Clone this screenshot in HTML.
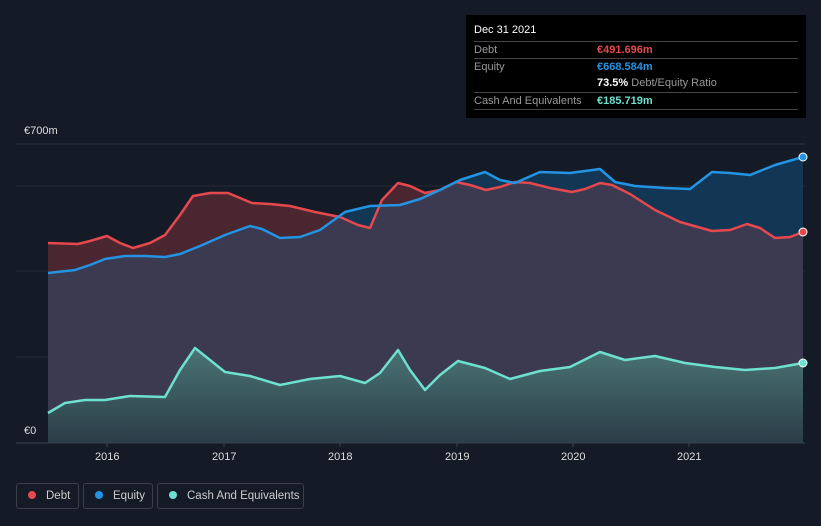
<!DOCTYPE html>
<html><head><style>
body{margin:0;width:821px;height:526px;background:#151b26;font-family:"Liberation Sans",sans-serif;overflow:hidden;position:relative}
.tt{position:absolute;left:466px;top:15px;width:340px;height:103px;background:#000;color:#fff;font-size:11px}
.row{position:absolute;left:8px;width:324px;border-top:1px solid #444;height:17px;line-height:17px}
.lab{color:#999}
.leg{position:absolute;top:483px;height:26px;border:1px solid #3a3f4a;border-radius:3px;color:#ccc;font-size:11.5px;line-height:24px;box-sizing:border-box;white-space:nowrap;overflow:hidden}
.dot{display:inline-block;width:8px;height:8px;border-radius:50%;margin:0 10px 0 11px;vertical-align:-0px}
.ax{position:absolute;color:#ddd;font-size:11px}
</style></head><body>
<svg width="821" height="526" style="position:absolute;left:0;top:0">
<defs><linearGradient id="cg" x1="0" y1="0" x2="0" y2="1"><stop offset="0" stop-color="#4a7474"/><stop offset="1" stop-color="#2b3d48"/></linearGradient></defs>
<line x1="16" y1="144" x2="805" y2="144" stroke="#2c3340"/>
<line x1="16" y1="186" x2="805" y2="186" stroke="#232a36"/>
<line x1="16" y1="271" x2="805" y2="271" stroke="#232a36"/>
<line x1="16" y1="357" x2="805" y2="357" stroke="#232a36"/>
<polygon fill="#4a2631" points="48,243 78,244 90,241 107,236 120,243 133,248 150,243 165,235 180,215 193,196 210,193 228,193 240,198 252,203 270,204 290,206 315,212 340,217 358,225 370,228 382,200 398,183 410,186 425,193 440,190 456,182 470,185 486,190 500,187 515,182 530,183 550,188 572,192 585,189 600,183 612,185 630,194 655,210 680,222 712,231 730,230 747,224 760,228 775,238 790,237 803,232 803,443 48,443"/>
<polygon fill="#133654" points="48,273 75,270 90,265 105,259 125,256 145,256 165,257 180,254 200,246 225,235 250,226 262,229 280,238 300,237 320,230 345,212 370,206 400,205 420,199 440,190 460,180 485,172 500,180 515,183 540,172 570,173 600,169 615,182 635,186 665,188 690,189 712,172 730,173 750,175 775,165 803,157 803,443 48,443"/>
<clipPath id="dc"><polygon points="48,243 78,244 90,241 107,236 120,243 133,248 150,243 165,235 180,215 193,196 210,193 228,193 240,198 252,203 270,204 290,206 315,212 340,217 358,225 370,228 382,200 398,183 410,186 425,193 440,190 456,182 470,185 486,190 500,187 515,182 530,183 550,188 572,192 585,189 600,183 612,185 630,194 655,210 680,222 712,231 730,230 747,224 760,228 775,238 790,237 803,232 803,443 48,443"/></clipPath>
<polygon clip-path="url(#dc)" fill="#3c3a50" points="48,273 75,270 90,265 105,259 125,256 145,256 165,257 180,254 200,246 225,235 250,226 262,229 280,238 300,237 320,230 345,212 370,206 400,205 420,199 440,190 460,180 485,172 500,180 515,183 540,172 570,173 600,169 615,182 635,186 665,188 690,189 712,172 730,173 750,175 775,165 803,157 803,443 48,443"/>
<polygon fill="url(#cg)" points="48,413 65,403 85,400 105,400 130,396 165,397 180,370 195,348 210,360 225,372 250,376 280,385 310,379 340,376 365,383 380,373 398,350 410,370 425,390 440,375 458,361 485,368 510,379 540,371 570,367 600,352 625,360 655,356 685,363 715,367 745,370 775,368 803,363 803,443 48,443"/>
<polyline fill="none" stroke="#e5484d" stroke-width="2.5" stroke-linejoin="round" points="48,243 78,244 90,241 107,236 120,243 133,248 150,243 165,235 180,215 193,196 210,193 228,193 240,198 252,203 270,204 290,206 315,212 340,217 358,225 370,228 382,200 398,183 410,186 425,193 440,190 456,182 470,185 486,190 500,187 515,182 530,183 550,188 572,192 585,189 600,183 612,185 630,194 655,210 680,222 712,231 730,230 747,224 760,228 775,238 790,237 803,232"/>
<polyline fill="none" stroke="#2394e4" stroke-width="2.5" stroke-linejoin="round" points="48,273 75,270 90,265 105,259 125,256 145,256 165,257 180,254 200,246 225,235 250,226 262,229 280,238 300,237 320,230 345,212 370,206 400,205 420,199 440,190 460,180 485,172 500,180 515,183 540,172 570,173 600,169 615,182 635,186 665,188 690,189 712,172 730,173 750,175 775,165 803,157"/>
<polyline fill="none" stroke="#6de0d0" stroke-width="2.5" stroke-linejoin="round" points="48,413 65,403 85,400 105,400 130,396 165,397 180,370 195,348 210,360 225,372 250,376 280,385 310,379 340,376 365,383 380,373 398,350 410,370 425,390 440,375 458,361 485,368 510,379 540,371 570,367 600,352 625,360 655,356 685,363 715,367 745,370 775,368 803,363"/>
<line x1="16" y1="443" x2="805" y2="443" stroke="#3a404c"/>
<g stroke="#3a404c"><line x1="107" y1="443" x2="107" y2="447"/><line x1="224" y1="443" x2="224" y2="447"/><line x1="340" y1="443" x2="340" y2="447"/><line x1="457" y1="443" x2="457" y2="447"/><line x1="573" y1="443" x2="573" y2="447"/><line x1="689" y1="443" x2="689" y2="447"/></g>
<circle cx="803" cy="232" r="4" fill="#e5484d" stroke="#fff" stroke-width="1"/>
<circle cx="803" cy="157" r="4" fill="#2394e4" stroke="#fff" stroke-width="1"/>
<circle cx="803" cy="363" r="4" fill="#6de0d0" stroke="#fff" stroke-width="1"/>
<rect x="16" y="424" width="32" height="18" fill="#151b26"/>
</svg>
<div class="ax" style="left:24px;top:125px">€700m</div>
<div class="ax" style="left:24px;top:425px">€0</div>
<div class="ax" style="left:95px;top:451px">2016</div>
<div class="ax" style="left:212px;top:451px">2017</div>
<div class="ax" style="left:328px;top:451px">2018</div>
<div class="ax" style="left:445px;top:451px">2019</div>
<div class="ax" style="left:561px;top:451px">2020</div>
<div class="ax" style="left:677px;top:451px">2021</div>
<div class="tt">
<div style="position:absolute;left:8px;top:9px">Dec 31 2021</div>
<div class="row" style="top:26px"><span class="lab">Debt</span><span style="position:absolute;left:123px;color:#e5484d;font-weight:bold">€491.696m</span></div>
<div class="row" style="top:43px"><span class="lab">Equity</span><span style="position:absolute;left:123px;color:#2394e4;font-weight:bold">€668.584m</span></div>
<div style="position:absolute;left:131px;top:60px;line-height:17px"><b>73.5%</b> <span class="lab">Debt/Equity Ratio</span></div>
<div class="row" style="top:77px"><span class="lab">Cash And Equivalents</span><span style="position:absolute;left:123px;color:#6de0d0;font-weight:bold">€185.719m</span></div>
<div class="row" style="top:94px;height:0"></div>
</div>
<div class="leg" style="left:16px;width:63px"><span class="dot" style="background:#e5484d"></span>Debt</div>
<div class="leg" style="left:83px;width:70px"><span class="dot" style="background:#2394e4"></span>Equity</div>
<div class="leg" style="left:157px;width:147px"><span class="dot" style="background:#6de0d0"></span>Cash And Equivalents</div>
</body></html>
